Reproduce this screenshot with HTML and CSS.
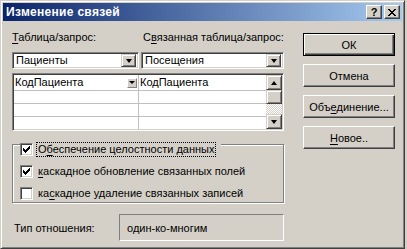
FILE: index.html
```html
<!DOCTYPE html>
<html lang="ru">
<head>
    <meta charset="UTF-8">
    <title>Изменение связей</title>
    <link rel="stylesheet" href="styles.css">
</head>
<body>
    <div class="window">
        <div class="titlebar">
            <span class="title">Изменение связей</span>
            <div class="caption-buttons">
                <button class="cap-btn help">?</button>
                <button class="cap-btn">
                    <svg width="8" height="7" viewBox="0 0 8 7">
                        <path d="M0 0h2v1h1v1h2v-1h1v-1h2v1h-1v1h-1v1h-1v1h1v1h1v1h1v1h-2v-1h-1v-1h-2v1h-1v1h-2v-1h1v-1h1v-1h1v-1h-1v-1h-1v-1h-1z" fill="#000"/>
                    </svg>
                </button>
            </div>
        </div>

        <div class="content">
            <div class="main">
                <div class="tables">
                    <div class="table-col left">
                        <div class="label"><u>Т</u>аблица/запрос:</div>
                        <div class="combo">
                            <span class="combo-text">Пациенты</span>
                            <span class="drop-btn"><span class="arrow"></span></span>
                        </div>
                    </div>
                    <div class="table-col right">
                        <div class="label">С<u>в</u>язанная таблица/запрос:</div>
                        <div class="combo">
                            <span class="combo-text">Посещения</span>
                            <span class="drop-btn"><span class="arrow"></span></span>
                        </div>
                    </div>
                </div>

                <div class="fields-grid">
                    <div class="grid-body">
                        <div class="grid-row first">
                            <div class="cell">КодПациента<span class="cell-btn"><span class="arrow small"></span></span></div>
                            <div class="cell">КодПациента</div>
                        </div>
                        <div class="grid-row"><div class="cell"></div><div class="cell"></div></div>
                        <div class="grid-row"><div class="cell"></div><div class="cell"></div></div>
                        <div class="grid-row last"><div class="cell"></div><div class="cell"></div></div>
                    </div>
                    <div class="scrollbar">
                        <span class="sb-btn up"><span class="arrow up"></span></span>
                        <span class="sb-thumb"></span>
                        <span class="sb-track"></span>
                        <span class="sb-btn down"><span class="arrow"></span></span>
                    </div>
                </div>

                <div class="group">
                    <div class="check-row group-title">
                        <span class="checkbox">
                            <svg class="tick" width="7" height="7" viewBox="0 0 7 7"><path d="M0 2h1v1h1v1h1v-1h1v-1h1v-1h1v-1h1v3h-1v1h-1v1h-1v1h-1v1h-1v-1h-1v-1h-1z" fill="#000"/></svg>
                        </span>
                        <span class="check-label focused">О<u>б</u>еспечение целостности данных</span>
                    </div>
                    <div class="check-row">
                        <span class="checkbox">
                            <svg class="tick" width="7" height="7" viewBox="0 0 7 7"><path d="M0 2h1v1h1v1h1v-1h1v-1h1v-1h1v-1h1v3h-1v1h-1v1h-1v1h-1v1h-1v-1h-1v-1h-1z" fill="#000"/></svg>
                        </span>
                        <span class="check-label"><u>к</u>аскадное обновление связанных полей</span>
                    </div>
                    <div class="check-row">
                        <span class="checkbox"></span>
                        <span class="check-label">ка<u>с</u>кадное удаление связанных записей</span>
                    </div>
                </div>

                <div class="relation">
                    <span class="relation-label">Тип отношения:</span>
                    <span class="relation-box">один-ко-многим</span>
                </div>
            </div>

            <div class="buttons">
                <button class="btn default">ОК</button>
                <button class="btn">Отмена</button>
                <button class="btn">Объ<u>е</u>динение...</button>
                <button class="btn"><u>Н</u>овое..</button>
            </div>
        </div>
    </div>
</body>
</html>
```

FILE: styles.css
```css
* {
    margin: 0;
    padding: 0;
    box-sizing: border-box;
    font-family: "Liberation Sans", Arial, sans-serif;
}

body {
    background: #d4d0c8;
    font-size: 11px;
    color: #000;
}

u {
    text-decoration-thickness: 1px;
    text-underline-offset: 2px;
}

.window {
    width: 405px;
    height: 249px;
    background: #d4d0c8;
    border: 1px solid;
    border-color: #d4d0c8 #404040 #404040 #d4d0c8;
    box-shadow: inset 1px 1px #fff, inset -1px -1px #808080;
    padding: 2px;
    display: flex;
    flex-direction: column;
}

/* title bar */
.titlebar {
    height: 18px;
    background: linear-gradient(to right, #0a246a, #a6caf0);
    display: flex;
    align-items: flex-start;
    justify-content: space-between;
    padding-left: 3px;
}

.title {
    color: #fff;
    font-weight: bold;
    font-size: 12px;
    letter-spacing: 0.3px;
    line-height: 18px;
}

.caption-buttons {
    display: flex;
    gap: 2px;
    margin: 2px 2px 0 0;
}

.cap-btn {
    width: 16px;
    height: 14px;
    background: #d4d0c8;
    border: 1px solid;
    border-color: #fff #404040 #404040 #fff;
    box-shadow: inset -1px -1px #808080, inset 1px 1px #d4d0c8;
    display: flex;
    align-items: center;
    justify-content: center;
}

.cap-btn.help {
    font-weight: bold;
    font-size: 11px;
    line-height: 12px;
}

/* content */
.content {
    flex: 1;
    display: flex;
    gap: 19px;
    padding: 10px 7px 0 9px;
}

.main {
    width: 272px;
    display: flex;
    flex-direction: column;
}

.tables {
    display: flex;
    gap: 2px;
}

.table-col.left {
    width: 127px;
}

.table-col.right {
    flex: 1;
}

.label {
    line-height: 13px;
    margin-bottom: 8px;
    white-space: nowrap;
}

.table-col.right .label {
    padding-left: 2px;
}

.combo {
    height: 17px;
    background: #fff;
    border: 1px solid;
    border-color: #808080 #fff #fff #808080;
    box-shadow: inset 1px 1px #404040, inset -1px -1px #d4d0c8;
    display: flex;
    align-items: center;
    padding: 2px;
}

.combo-text {
    flex: 1;
    padding-left: 1px;
    line-height: 13px;
}

.drop-btn {
    width: 15px;
    height: 13px;
    background: #d4d0c8;
    border: 1px solid;
    border-color: #d4d0c8 #404040 #404040 #d4d0c8;
    box-shadow: inset 1px 1px #fff, inset -1px -1px #808080;
    display: flex;
    align-items: center;
    justify-content: center;
}

.arrow {
    width: 0;
    height: 0;
    border-left: 3.5px solid transparent;
    border-right: 3.5px solid transparent;
    border-top: 4px solid #000;
}

.arrow.up {
    border-top: none;
    border-bottom: 4px solid #000;
}

.arrow.small {
    border-left-width: 3px;
    border-right-width: 3px;
    border-top-width: 3px;
}

/* fields grid */
.fields-grid {
    margin-top: 4px;
    height: 58px;
    background: #fff;
    border: 1px solid;
    border-color: #808080 #fff #fff #808080;
    box-shadow: inset 1px 1px #404040, inset -1px -1px #d4d0c8;
    padding: 1px;
    display: flex;
}

.grid-body {
    flex: 1;
    display: flex;
    flex-direction: column;
}

.grid-row {
    height: 13px;
    display: flex;
    border-bottom: 1px solid #c0c0c0;
}

.grid-row.first {
    height: 16px;
}

.grid-row.last {
    flex: 1;
    border-bottom: none;
}

.cell {
    display: flex;
    align-items: center;
    padding-left: 1px;
    line-height: 13px;
}

.cell:first-child {
    width: 125px;
    border-right: 1px solid #c0c0c0;
    padding-right: 1px;
}

.cell:last-child {
    flex: 1;
}

.cell-btn {
    margin-left: auto;
    width: 10px;
    height: 10px;
    background: #d4d0c8;
    border: 1px solid;
    border-color: #fff #808080 #808080 #fff;
    display: flex;
    align-items: center;
    justify-content: center;
}

.scrollbar {
    width: 16px;
    display: flex;
    flex-direction: column;
}

.sb-btn,
.sb-thumb {
    background: #d4d0c8;
    border: 1px solid;
    border-color: #d4d0c8 #404040 #404040 #d4d0c8;
    box-shadow: inset 1px 1px #fff, inset -1px -1px #808080;
    display: flex;
    align-items: center;
    justify-content: center;
}

.sb-btn.up {
    height: 15px;
}

.sb-thumb {
    height: 14px;
}

.sb-track {
    flex: 1;
    background: repeating-conic-gradient(#d4d0c8 0 25%, #fff 0 50%) 0 0 / 2px 2px;
}

.sb-btn.down {
    height: 15px;
}

/* group box */
.group {
    margin-top: 13px;
    height: 59px;
    border: 1px solid #808080;
    box-shadow: inset 1px 1px #fff, 1px 1px #fff;
    padding: 0 0 0 7px;
    display: flex;
    flex-direction: column;
    gap: 7px;
}

.check-row {
    display: flex;
    align-items: center;
    height: 14px;
}

.group-title {
    align-self: flex-start;
    margin-top: -3px;
    background: #d4d0c8;
    padding-right: 6px;
}

.check-row + .check-row {
    margin-top: 1px;
}

.checkbox {
    width: 13px;
    height: 13px;
    background: #fff;
    border: 1px solid;
    border-color: #808080 #fff #fff #808080;
    box-shadow: inset 1px 1px #404040, inset -1px -1px #d4d0c8;
    margin-right: 4px;
    display: flex;
    align-items: center;
    justify-content: center;
}

.tick {
    shape-rendering: crispEdges;
}

.check-label {
    line-height: 13px;
    padding: 0 1px;
    white-space: nowrap;
}

.check-label.focused {
    outline: 1px dotted #000;
}

/* relationship type */
.relation {
    margin-top: 11px;
    display: flex;
    align-items: center;
}

.relation-label {
    width: 107px;
    padding-left: 2px;
}

.relation-box {
    flex: 1;
    height: 27px;
    border: 1px solid;
    border-color: #808080 #fff #fff #808080;
    box-shadow: inset 1px 1px #d4d0c8;
    display: flex;
    align-items: center;
    padding-left: 7px;
}

/* buttons */
.buttons {
    display: flex;
    flex-direction: column;
    gap: 8px;
    padding-top: 2px;
}

.btn {
    width: 92px;
    height: 23px;
    background: #d4d0c8;
    border: 1px solid;
    border-color: #fff #404040 #404040 #fff;
    box-shadow: inset -1px -1px #808080, inset 1px 1px #d4d0c8;
    font-size: 11px;
    color: #000;
}

.btn.default {
    border: 1px solid #000;
    box-shadow: inset 1px 1px #fff, inset -1px -1px #404040, inset -2px -2px #808080;
}
```
